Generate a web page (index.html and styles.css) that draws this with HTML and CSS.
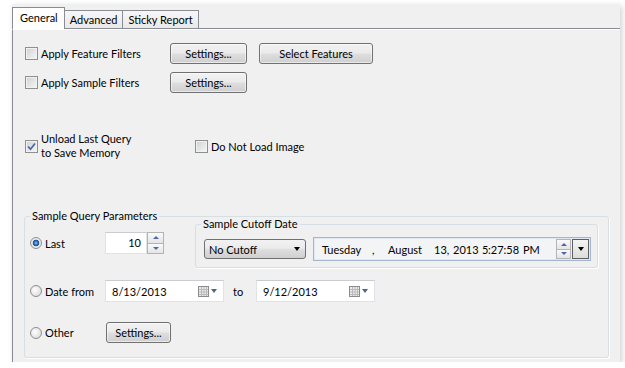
FILE: index.html
```html
<!DOCTYPE html>
<html lang="en">
<head>
<meta charset="utf-8">
<title>Options</title>
<link rel="stylesheet" href="styles.css">
</head>
<body>
<div class="window">
	<div class="tabs">
		<div class="tab active">General</div>
		<div class="tab">Advanced</div>
		<div class="tab">Sticky Report</div>
	</div>
	<div class="panel">
		<div class="row">
			<label class="check w-filter"><span class="box"></span>Apply Feature Filters</label>
			<button class="btn w-settings">Settings...</button>
			<button class="btn w-select">Select Features</button>
		</div>
		<div class="row row-second">
			<label class="check w-filter"><span class="box"></span>Apply Sample Filters</label>
			<button class="btn w-settings">Settings...</button>
		</div>
		<div class="row row-memory">
			<label class="check w-memory">
				<span class="box"><svg width="11" height="11" viewBox="0 0 11 11"><path d="M2 5.5 L4.5 8.2 L9 2.5" stroke="#4b6aa6" stroke-width="1.8" fill="none"/></svg></span>
				<span class="two-line">Unload Last Query<br>to Save Memory</span>
			</label>
			<label class="check"><span class="box"></span>Do Not Load Image</label>
		</div>
		<fieldset class="group outer">
			<legend>Sample Query Parameters</legend>
			<div class="q-row q-last">
				<label class="opt"><span class="radio on"></span>Last</label>
				<div class="spin">
					<div class="spin-val">10</div>
					<div class="spin-btns">
						<span class="sb up"></span>
						<span class="sb down"></span>
					</div>
				</div>
				<fieldset class="group cutoff">
					<legend>Sample Cutoff Date</legend>
					<div class="cutoff-body">
						<div class="select">No Cutoff<span class="tri"></span></div>
						<div class="dtp">
							<div class="dtp-text">
								<span>Tuesday</span><span>,</span><span>August</span><span>13,</span><span>2013</span><span>5</span><span>:27:58</span><span>PM</span>
							</div>
							<div class="dtp-spin">
								<span class="sb up"></span>
								<span class="sb down"></span>
							</div>
							<div class="dtp-drop"><span class="tri"></span></div>
						</div>
					</div>
				</fieldset>
			</div>
			<div class="q-row q-date">
				<label class="opt"><span class="radio"></span>Date from</label>
				<div class="field date">
					<span>8/13/2013</span>
					<span class="cal">
						<svg width="11" height="11" viewBox="0 0 11 11"><rect x="0.5" y="0.5" width="10" height="10" fill="#ececec" stroke="#8c8c8c"/><path d="M1 3.5H10M1 6H10M1 8.5H10M3.5 1V10M6 1V10M8.5 1V10" stroke="#b9b9b9"/></svg>
						<span class="cal-arrow"></span>
					</span>
				</div>
				<span class="to">to</span>
				<div class="field date">
					<span>9/12/2013</span>
					<span class="cal">
						<svg width="11" height="11" viewBox="0 0 11 11"><rect x="0.5" y="0.5" width="10" height="10" fill="#ececec" stroke="#8c8c8c"/><path d="M1 3.5H10M1 6H10M1 8.5H10M3.5 1V10M6 1V10M8.5 1V10" stroke="#b9b9b9"/></svg>
						<span class="cal-arrow"></span>
					</span>
				</div>
			</div>
			<div class="q-row q-other">
				<label class="opt"><span class="radio"></span>Other</label>
				<button class="btn w-other">Settings...</button>
			</div>
		</fieldset>
	</div>
</div>
</body>
</html>
```

FILE: styles.css
```css
*{
	padding: 0;
	margin: 0;
	box-sizing: border-box;
}
body{
	background: #fff;
	font-family: Lato, "Liberation Sans", sans-serif;
	font-size: 11px;
	color: #000;
}
.window{
	margin: 4px 0 0 12px;
	width: 608px;
	height: 358px;
	background: #f0f0f0;
	box-shadow: 2px 2px 6px rgba(0,0,0,0.18);
	display: flex;
	flex-direction: column;
}

/* tabs */
.tabs{
	display: flex;
	align-items: flex-end;
	height: 25px;
	border-bottom: 1px solid #898c95;
}
.tab{
	height: 18px;
	line-height: 17px;
	padding: 0 5px;
	border: 1px solid #898c95;
	border-bottom: none;
	margin-left: -1px;
	background: linear-gradient(#f7f7f7, #e9e9e9);
}
.tab:first-child{
	margin-left: 0;
}
.tab.active{
	position: relative;
	z-index: 1;
	height: 22px;
	margin-bottom: -1px;
	padding: 1px 6px 0 7px;
	line-height: 18px;
	background: #fff;
}

/* main panel */
.panel{
	flex: 1;
	border-left: 1px solid #898c95;
	border-top: 1px solid #fff;
	padding-left: 11px;
}
.row{
	display: flex;
	align-items: center;
	height: 21px;
	margin-top: 13px;
}
.row-second{
	margin-top: 8px;
}
.row-memory{
	height: 28px;
	margin-top: 39px;
}
.check{
	display: flex;
	align-items: center;
	padding-left: 1px;
}
.w-filter{
	width: 146px;
}
.w-memory{
	width: 170px;
}
.two-line{
	line-height: 14px;
}
.box{
	width: 13px;
	height: 13px;
	margin-right: 3px;
	border: 1px solid #8e8f8f;
	background: linear-gradient(135deg, #cdd0d4, #f7f7f7);
	box-shadow: inset 0 0 0 1px #f2f2f2;
	flex-shrink: 0;
}
.box svg{
	display: block;
}

.btn{
	font: inherit;
	color: #000;
	height: 21px;
	border: 1px solid #707070;
	border-radius: 3px;
	background: linear-gradient(#f2f2f2 0%, #ebebeb 45%, #dddddd 55%, #cfcfcf 100%);
	box-shadow: inset 0 0 0 1px rgba(255,255,255,0.55);
}
.w-settings{
	width: 77px;
}
.w-select{
	width: 114px;
	margin-left: 12px;
}
.w-other{
	width: 65px;
	margin-left: 1px;
}

/* group boxes */
.group{
	border: 1px solid #d5dfe5;
	border-radius: 3px;
	box-shadow: 1px 1px 0 #fff;
}
.group legend{
	padding: 0 2px;
	line-height: 14px;
}
.outer{
	margin: 49px 11px 0 0;
	padding: 0 5px 14px 5px;
}
.q-row{
	display: flex;
	align-items: center;
}
.q-last{
	align-items: flex-start;
	margin-top: -6px;
}
.q-date{
	height: 22px;
	margin-top: 12px;
}
.q-other{
	height: 21px;
	margin-top: 20px;
}
.opt{
	width: 75px;
	height: 22px;
	display: flex;
	align-items: center;
}
.q-last .opt,
.q-last .spin{
	margin-top: 15px;
}
.radio{
	width: 12px;
	height: 12px;
	margin-right: 3px;
	border-radius: 50%;
	border: 1px solid #8e8f8f;
	background: radial-gradient(circle at 40% 40%, #ffffff, #d3d3d3);
}
.radio.on{
	background: radial-gradient(circle at 50% 50%, #8cc0ee 0, #2a6cb6 2px, #1a4f93 3px, #e4e4e4 3.6px, #f8f8f8 100%);
}

/* spin box */
.spin{
	display: flex;
	width: 59px;
	height: 22px;
}
.spin-val{
	width: 42px;
	height: 22px;
	line-height: 20px;
	text-align: right;
	padding-right: 5px;
	background: #fff;
	border: 1px solid #dfe2e7;
	border-top-color: #c9ccd1;
}
.spin-btns{
	width: 17px;
	display: flex;
	flex-direction: column;
}
.sb{
	flex: 1;
	border: 1px solid #b2b4b8;
	background: linear-gradient(#fafafa, #e4e4e4);
	display: flex;
	align-items: center;
	justify-content: center;
}
.sb.down{
	border-top: none;
}
.sb::after{
	content: "";
	border-left: 3px solid transparent;
	border-right: 3px solid transparent;
}
.sb.up::after{
	border-bottom: 3px solid #4c68a8;
}
.sb.down::after{
	border-top: 3px solid #4c68a8;
}

/* cutoff date */
.cutoff{
	margin-left: 31px;
	width: 403px;
	padding: 6px 5px 6px 5px;
}
.cutoff-body{
	display: flex;
	align-items: center;
	height: 24px;
}
.select{
	width: 102px;
	height: 20px;
	margin-left: 3px;
	padding: 0 5px 0 4px;
	display: flex;
	align-items: center;
	justify-content: space-between;
	border: 1px solid #707070;
	border-radius: 3px;
	background: linear-gradient(#f2f2f2 0%, #ebebeb 45%, #dddddd 55%, #cfcfcf 100%);
}
.tri{
	border-left: 3.5px solid transparent;
	border-right: 3.5px solid transparent;
	border-top: 4px solid #000;
}
.dtp{
	width: 278px;
	height: 24px;
	margin-left: 7px;
	display: flex;
	align-items: center;
	padding: 0 1px 0 8px;
	border: 1px solid #a4b6cf;
	background: #f3f4f6;
	box-shadow: inset 0 0 0 1px #dfe8f3;
}
.dtp-text{
	display: grid;
	grid-template-columns: 50px 16px 46px 19px 29px 6px 35px auto;
	flex: 1;
}
.dtp-spin{
	width: 15px;
	height: 20px;
	display: flex;
	flex-direction: column;
}
.dtp-drop{
	width: 17px;
	height: 20px;
	margin-left: 1px;
	border: 1px solid #5e5e5e;
	background: linear-gradient(#f4f4f4, #dcdcdc);
	display: flex;
	align-items: center;
	justify-content: center;
}

/* date fields */
.field{
	height: 22px;
	background: #fff;
	border: 1px solid #dfe2e7;
	border-top-color: #c9ccd1;
}
.date{
	width: 119px;
	display: flex;
	align-items: center;
	justify-content: space-between;
	padding: 0 6px 0 6px;
}
.cal{
	display: flex;
	align-items: center;
}
.cal svg{
	display: block;
}
.cal-arrow{
	margin-left: 2px;
	border-left: 3.5px solid transparent;
	border-right: 3.5px solid transparent;
	border-top: 4px solid #4f6489;
}
.to{
	width: 32px;
	padding-left: 9px;
}
```
